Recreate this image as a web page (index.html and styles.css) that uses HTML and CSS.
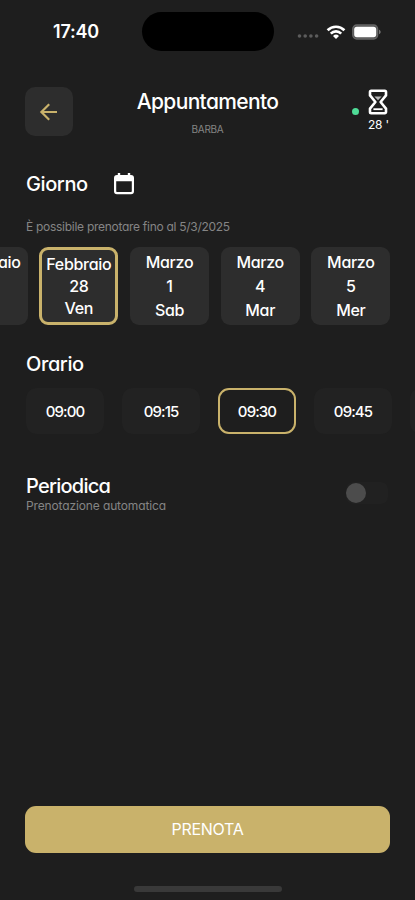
FILE: index.html
```html
<!DOCTYPE html>
<html lang="it">
<head>
<meta charset="utf-8">
<meta name="viewport" content="width=device-width, initial-scale=1">
<title>Appuntamento</title>
<link rel="stylesheet" href="styles.css">
</head>
<body>
<div class="screen">
  <div class="status">
    <div class="clock">17:40</div>
    <div class="island"></div>
    <div class="indicators">
      <svg class="signal" width="22" height="16" viewBox="0 0 22 16"><g fill="#5c5c5c"><circle cx="2.5" cy="12" r="1.8"/><circle cx="8.2" cy="12" r="1.8"/><circle cx="13.9" cy="12" r="1.8"/><circle cx="19.6" cy="12" r="1.8"/></g></svg>
      <svg class="wifi" width="20" height="16" viewBox="0 0 20 16"><g fill="none" stroke="#fff" stroke-width="2.7"><path d="M1.6 6.2a12 12 0 0 1 16.8 0"/><path d="M4.8 9.6a7.4 7.4 0 0 1 10.4 0"/></g><path d="M10 15l-3-3.1a4.300 4.300 0 0 1 6 0z" fill="#fff"/></svg>
      <svg class="battery" width="29" height="16" viewBox="0 0 29 16"><rect x=".8" y="1" width="24.8" height="14" rx="4" fill="#555" stroke="#666" stroke-width="1.400"/><rect x="2.200" y="2.700" width="22" height="10.600" rx="2.700" fill="#fff"/><path d="M27 5.800c2.200.7 2.200 3.700 0 4.400z" fill="#747474"/></svg>
    </div>
  </div>

  <header class="header">
    <button class="back" aria-label="Indietro"><svg width="20" height="20" viewBox="0 0 20 20"><path d="M18 10H2.400M10.200 2.300L2.400 10l7.800 7.700" fill="none" stroke="#c9b26b" stroke-width="2.200"/></svg></button>
    <div class="heading">
      <h1>Appuntamento</h1>
      <p>BARBA</p>
    </div>
    <div class="wait">
      <span class="online"></span>
      <div class="timer">
        <svg width="20" height="26" viewBox="0 0 20 26"><g fill="none" stroke="#fff" stroke-width="2.600" stroke-linejoin="round"><path d="M3.200 1.800h13.600a1.200 1.200 0 0 1 1.200 1.200v3.400L12.600 13l5.400 6.600V23a1.200 1.200 0 0 1-1.200 1.200H3.200A1.200 1.200 0 0 1 2 23v-3.400L7.400 13 2 6.400V3a1.200 1.200 0 0 1 1.200-1.200z"/><path d="M5.400 20.200h9.200" stroke-width="1.800"/></g><path d="M6.400 7.400h7.200L10 11.200z" fill="#bbb"/></svg>
        <span>28 '</span>
      </div>
    </div>
  </header>

  <main>
    <div class="day-title"><h2 class="giorno">Giorno</h2>
      <svg width="20" height="22" viewBox="0 0 20 22"><path fill="#fff" fill-rule="evenodd" d="M3.800 0h2.400v2h7.600V0h2.400v2H17a3 3 0 0 1 3 3v13.200a3 3 0 0 1-3 3H3a3 3 0 0 1-3-3V5a3 3 0 0 1 3-3h.8zM2.200 8.200v9.800c0 .7.400 1.100 1.100 1.100h13.400c.7 0 1.100-.4 1.100-1.100V8.200z"/></svg>
    </div>
    <p class="note">È possibile prenotare fino al 5/3/2025</p>
    <div class="days">
      <div class="day previous"><span>aio</span></div>
      <div class="day selected"><span>Febbraio</span><span>28</span><span>Ven</span></div>
      <div class="day"><span>Marzo</span><span>1</span><span>Sab</span></div>
      <div class="day"><span>Marzo</span><span>4</span><span>Mar</span></div>
      <div class="day"><span>Marzo</span><span>5</span><span>Mer</span></div>
    </div>

    <h2 class="orario">Orario</h2>
    <div class="slots">
      <div class="slot">09:00</div>
      <div class="slot">09:15</div>
      <div class="slot chosen">09:30</div>
      <div class="slot">09:45</div>
      <div class="slot"></div>
    </div>

    <div class="periodic">
      <div><h2 class="periodica">Periodica</h2><p>Prenotazione automatica</p></div>
      <div class="toggle"><span></span></div>
    </div>
  </main>

  <button class="book">PRENOTA</button>
  <div class="home"></div>
</div>
</body>
</html>
```

FILE: styles.css
```css
* { box-sizing: border-box; }
body { margin: 0; background: #1e1e1e; }
h1, h2, p { margin: 0; font-weight: 500; }
svg { display: block; flex: none; }
button { border: 0; padding: 0; font: inherit; }
.screen {
  width: 415px; height: 900px; overflow: hidden;
  display: flex; flex-direction: column;
  background: #1e1e1e; color: #fff;
  font-family: Inter, "Liberation Sans", sans-serif;
  font-feature-settings: "cv11", "calt" 0;
  font-weight: 500;
}
.status { display: grid; grid-template-columns: 142px 132px 141px; height: 87px; padding-top: 12px; align-items: start; }
.clock { padding-left: 10px; text-align: center; font-size: 18px; font-weight: 600; line-height: 40px; letter-spacing: -.2px; }
.island { height: 39px; border-radius: 20px; background: #000; }
.indicators { display: flex; padding: 12px 0 0 23px; }
.wifi { margin-left: 7px; }
.battery { margin-left: 6px; }

.header { display: grid; grid-template-columns: 48px 1fr 48px; height: 85px; padding: 0 25px; align-items: start; }
.back { display: grid; place-items: center; width: 48px; height: 49px; border-radius: 10px; background: #2d2d2d; }
.heading { padding-top: 1px; text-align: center; }
h1 { font-size: 21px; line-height: 28px; letter-spacing: -.65px; }
.heading p { margin-top: 6px; font-size: 10px; line-height: 14px; font-weight: 400; color: #858585; letter-spacing: -.3px; }
.wait { display: flex; padding: 2px 0 0 10px; gap: 9px; }
.online { flex: none; width: 7px; height: 7px; margin-top: 19px; border-radius: 50%; background: #4fdc97; }
.timer { width: 22px; }
.timer span { display: block; margin-top: 2px; font-size: 12px; line-height: 16px; font-weight: 400; letter-spacing: -.2px; white-space: nowrap; }

main { display: flex; flex-direction: column; }
h2 { font-size: 20px; line-height: 24px; letter-spacing: -.5px; white-space: nowrap; }
.day-title { display: flex; padding-left: 26px; height: 24px; }
.day-title svg { margin-top: 1px; }
.giorno { width: 88px; letter-spacing: -.4px; }
.note { margin: 23px 0 0 26px; font-size: 12px; line-height: 16px; font-weight: 400; color: #858585; letter-spacing: -.28px; white-space: nowrap; }
.days { display: flex; gap: 11.7px; margin: 12px 0 0 -51.4px; height: 78px; }
.day { flex: none; display: flex; flex-direction: column; align-items: center; width: 79px; height: 78px; padding-top: 3px; border-radius: 9px; background: #2d2d2d; font-size: 16px; line-height: 24px; letter-spacing: -.3px; }
.previous { align-items: flex-end; padding-right: 7px; }
.selected { padding-top: 3px; line-height: 22px; border: 3px solid #c9b26b; }
.orario { margin: 27px 0 0 26px; letter-spacing: -.4px; }
.slots { display: flex; gap: 18px; margin: 12px 0 0 26px; height: 46px; }
.slot { flex: none; display: grid; place-items: center; width: 78px; height: 46px; border-radius: 11px; background: #222; font-size: 15px; letter-spacing: -.9px; }
.chosen { border: 2px solid #c9b26b; background: #1e1e1e; }
.periodic { display: flex; justify-content: space-between; margin-top: 40px; padding: 0 27px 0 26px; }
.periodica { letter-spacing: -.75px; }
.periodic p { font-size: 12px; line-height: 16px; font-weight: 400; color: #858585; letter-spacing: -.13px; }
.toggle { width: 42px; height: 22px; margin-top: 8px; padding: 1px 0; border-radius: 7px; background: #212121; }
.toggle span { display: block; width: 20px; height: 20px; border-radius: 50%; background: #4c4c4c; }
.book { flex: none; height: 47px; margin: auto 25px 0; padding-bottom: 2px; border-radius: 11px; background: #c9b26b; color: #fff; font-size: 16px; font-weight: 400; letter-spacing: -.3px; }
.home { flex: none; width: 148px; height: 6px; margin: 33px 0 8px 134px; border-radius: 3px; background: #393939; }
```
